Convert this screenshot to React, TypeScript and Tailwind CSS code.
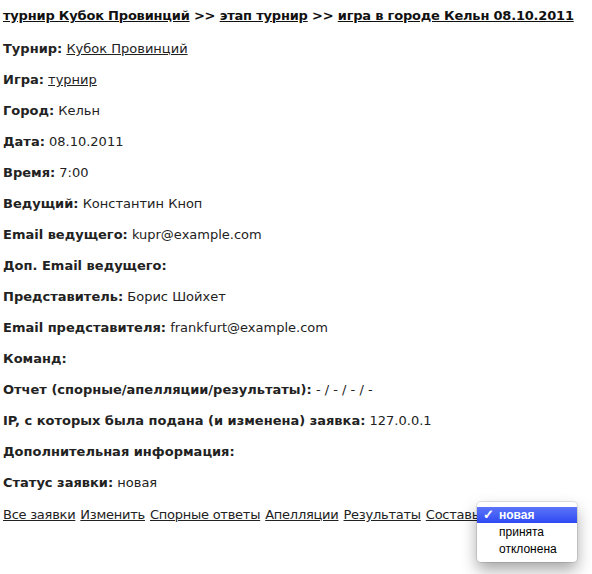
import React from "react";

const rows: { label: string; value?: string; link?: boolean }[] = [
  { label: "Турнир:", value: "Кубок Провинций", link: true },
  { label: "Игра:", value: "турнир", link: true },
  { label: "Город:", value: "Кельн" },
  { label: "Дата:", value: "08.10.2011" },
  { label: "Время:", value: "7:00" },
  { label: "Ведущий:", value: "Константин Кноп" },
  { label: "Email ведущего:", value: "kupr@example.com" },
  { label: "Доп. Email ведущего:" },
  { label: "Представитель:", value: "Борис Шойхет" },
  { label: "Email представителя:", value: "frankfurt@example.com" },
  { label: "Команд:" },
  { label: "Отчет (спорные/апелляции/результаты):", value: "- / - / - / -" },
  { label: "IP, с которых была подана (и изменена) заявка:", value: "127.0.0.1" },
  { label: "Дополнительная информация:" },
  { label: "Статус заявки:", value: "новая" },
];

const links = ["Все заявки", "Изменить", "Спорные ответы", "Апелляции", "Результаты", "Составы"];

export default function App() {
  return (
    <div className="relative h-[574px] w-[592px] overflow-hidden bg-white px-[3px] font-['DejaVu_Sans',Verdana,sans-serif] text-[13px] text-[#222]">
      <div className="whitespace-nowrap pt-[7px] text-[13px] font-bold leading-[18px] tracking-[-0.2px] text-[#111]">
        <a className="underline">турнир Кубок Провинций</a> &gt;&gt;{" "}
        <a className="underline">этап турнир</a> &gt;&gt;{" "}
        <a className="underline">игра в городе Кельн 08.10.2011</a>
      </div>

      <div className="mt-[16px] flex flex-col gap-[15px]">
        {rows.map((r) => (
          <p key={r.label} className="leading-[16px]">
            <b>{r.label}</b>{" "}
            {r.value && (r.link ? <a className="underline">{r.value}</a> : <span>{r.value}</span>)}
          </p>
        ))}
      </div>

      <div className="mt-[16px] flex gap-[5px] whitespace-nowrap leading-[16px] tracking-[-0.25px]">
        {links.map((l) => (
          <a key={l} className="underline">
            {l}
          </a>
        ))}
      </div>

      <div className="absolute left-[477px] top-[502px] w-[100px] rounded-[4px] bg-white py-[5px] font-['Liberation_Sans',Arial,sans-serif] text-[12px] text-black shadow-[0_8px_16px_rgba(0,0,0,0.35)] ring-1 ring-black/10">
        <div className="flex h-[16px] items-center bg-gradient-to-b from-[#5d74f8] to-[#2f48f3] pl-[6px] text-white">
          <span className="w-[16px] text-[13px] font-bold">✓</span>
          <span className="font-bold">новая</span>
        </div>
        <div className="flex h-[17px] items-center pl-[22px]">принята</div>
        <div className="flex h-[17px] items-center pl-[22px]">отклонена</div>
      </div>
    </div>
  );
}
